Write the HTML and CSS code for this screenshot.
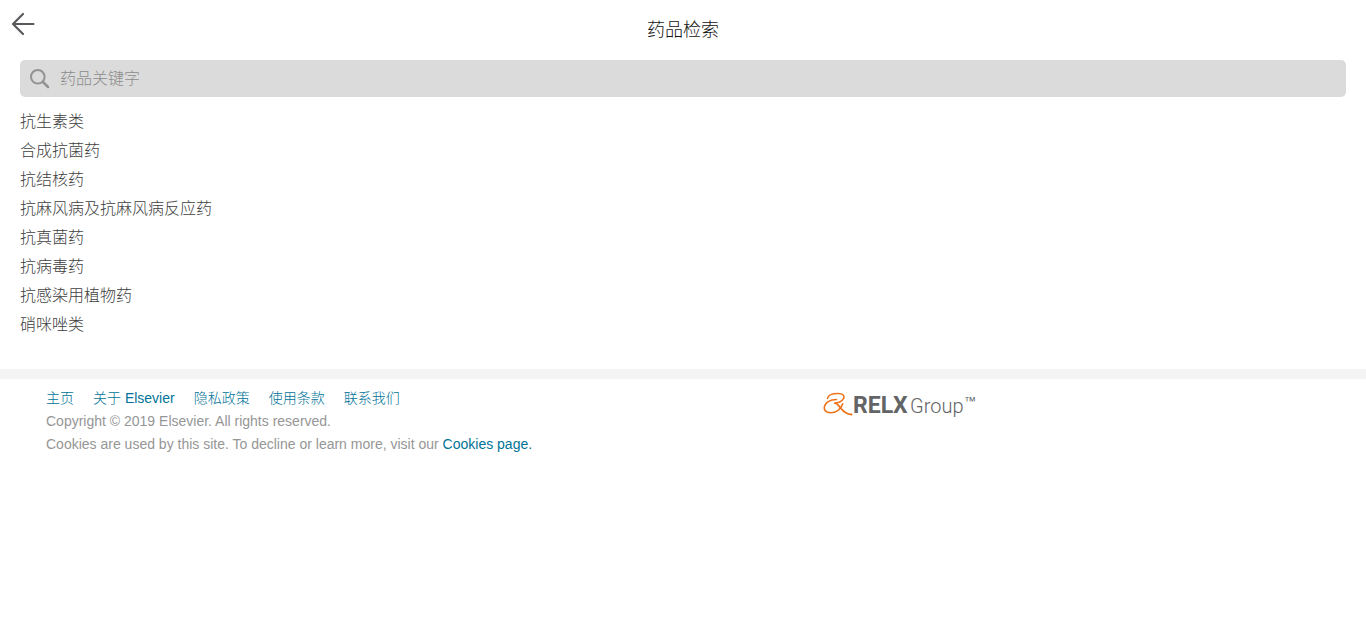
FILE: index.html
```html
<!DOCTYPE html>
<html lang="zh-CN">
<head>
<meta charset="utf-8">
<meta name="viewport" content="width=device-width, initial-scale=1">
<title>药品检索</title>
<link rel="stylesheet" href="styles.css">
</head>
<body>
<header class="header">
  <a class="back" href="#" aria-label="返回">
    <svg width="24" height="24" viewBox="0 0 24 24" aria-hidden="true"><path d="M22.500 12H2M12 2 2 12l10 10" fill="none" stroke="#58595d" stroke-width="2.200" stroke-linecap="round" stroke-linejoin="round"/></svg>
  </a>
  <h1 class="title">药品检索</h1>
</header>
<main class="main">
  <form class="search" role="search">
    <svg class="search-icon" width="20" height="20" viewBox="0 0 20 20" aria-hidden="true"><circle cx="7.800" cy="7.800" r="6.800" fill="none" stroke="#939393" stroke-width="2"/><path d="m13 13 5 5" stroke="#939393" stroke-width="2.500" stroke-linecap="round"/></svg>
    <input class="search-input" type="text" placeholder="药品关键字" aria-label="药品关键字">
  </form>
  <ul class="categories">
    <li><a href="#">抗生素类</a></li>
    <li><a href="#">合成抗菌药</a></li>
    <li><a href="#">抗结核药</a></li>
    <li><a href="#">抗麻风病及抗麻风病反应药</a></li>
    <li><a href="#">抗真菌药</a></li>
    <li><a href="#">抗病毒药</a></li>
    <li><a href="#">抗感染用植物药</a></li>
    <li><a href="#">硝咪唑类</a></li>
  </ul>
</main>
<footer class="footer">
  <div class="footer-info">
    <nav class="footer-links">
      <a href="#">主页</a>
      <a href="#">关于 Elsevier</a>
      <a href="#">隐私政策</a>
      <a href="#">使用条款</a>
      <a href="#">联系我们</a>
    </nav>
    <p>Copyright © 2019 Elsevier. All rights reserved.</p>
    <p>Cookies are used by this site. To decline or learn more, visit our <a href="#">Cookies page.</a></p>
  </div>
  <a class="footer-logo" href="#" aria-label="RELX Group">
    <svg width="154" height="30" viewBox="0 0 154 30" aria-hidden="true">
      <path d="M5.500 8.500C6 5 11 3.400 16 3.400c5 0 7 2.300 5.500 5.300-1.300 2.500-4.500 4-8.500 4.500" fill="none" stroke="#f0731a" stroke-width="1.500" stroke-linecap="round"/>
      <path d="M14.500 9.500C8 9.500 3 12.500 2.300 17c-.5 3.500 2.200 5.700 6 5.700 6 0 10.500-3.500 12.500-9" fill="none" stroke="#f0731a" stroke-width="1.600" stroke-linecap="round"/>
      <path d="M13 13.200c2.500.3 4 2.800 6 5.300 2.500 3.200 6 5.800 10.500 6" fill="none" stroke="#f0731a" stroke-width="1.800" stroke-linecap="round"/>
      <text class="logo-bold" x="31" y="23">RELX</text>
      <text class="logo-light" x="88" y="23">Group</text>
      <text class="logo-mark" x="142" y="15">™</text>
    </svg>
  </a>
</footer>
</body>
</html>
```
FILE: styles.css
```css
* {
  box-sizing: border-box;
}

body {
  margin: 0;
  background: #fff;
  color: #404040;
  font-family: "Liberation Sans", Arial, "Noto Sans CJK SC", sans-serif;
  font-size: 16px;
  font-weight: 300;
}

a {
  color: inherit;
  text-decoration: none;
}

.header {
  display: grid;
  grid-template-columns: 48px 1fr 48px;
  height: 60px;
}

.back {
  padding: 12px 0 0 11px;
}

.title {
  margin: 0;
  color: #111;
  font-size: 18px;
  font-weight: 300;
  line-height: 60px;
  text-align: center;
}

.main {
  padding: 0 20px 30px;
}

.search {
  display: flex;
  align-items: center;
  gap: 10px;
  height: 37px;
  padding: 0 10px;
  border-radius: 5px;
  background: #dbdbdb;
}

.search-input {
  flex: 1;
  min-width: 0;
  padding: 0;
  border: 0;
  outline: 0;
  background: transparent;
  color: #404040;
  font: inherit;
}

.search-input::placeholder {
  color: #8c8c8c;
  opacity: 1;
}

.categories {
  margin: 10px 0 0;
  padding: 0;
  line-height: 29px;
  list-style: none;
}

.footer {
  display: grid;
  grid-template-columns: 3fr 2fr;
  padding: 8px 46px 0;
  border-top: 10px solid #f4f4f4;
  color: #969696;
  font-size: 14px;
  line-height: 23px;
}

.footer p {
  margin: 0;
}

.footer-info a {
  color: #007398;
}

.footer-links {
  display: flex;
  flex-wrap: wrap;
  column-gap: 19px;
}

.footer-logo {
  padding: 3px 0 0 12px;
}

.logo-bold,
.logo-light {
  fill: #636466;
  font-family: Roboto, sans-serif;
}

.logo-bold {
  font-size: 23px;
  font-weight: 700;
}

.logo-light {
  font-size: 20px;
  font-weight: 300;
}

.logo-mark {
  fill: #636466;
  font-family: "Liberation Sans", Arial, sans-serif;
  font-size: 12px;
}
```
